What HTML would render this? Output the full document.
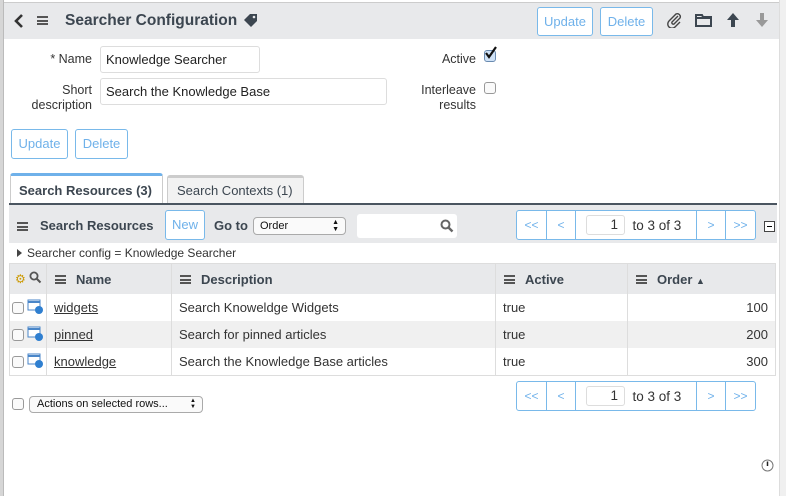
<!DOCTYPE html>
<html><head><meta charset="utf-8"><style>
*{box-sizing:border-box;margin:0;padding:0}
body{width:786px;height:496px;overflow:hidden;background:#fff;font-family:"Liberation Sans",sans-serif;font-size:13px;color:#333;position:relative}
.a{position:absolute}
.btn{position:absolute;border:1px solid #79b9ea;border-radius:3px;background:#fff;color:#6fb1ea;font-size:13px;text-align:center}
.inp{position:absolute;border:1px solid #ddd;border-radius:3px;background:#fff;padding-left:5px;font-size:13px;color:#222}
.lbl{position:absolute;text-align:right;font-size:12.5px;color:#333;line-height:15px}
.ham{position:absolute;width:11px;height:9px;border-top:2px solid #555;border-bottom:2px solid #555}
.ham:after{content:"";position:absolute;left:0;right:0;top:1.5px;border-top:2px solid #555}
.cb{position:absolute;width:12px;height:12px;border:1px solid #999;border-radius:3px;background:#fafafa}
.pager{position:absolute;display:flex;border:1px solid #79b9ea;border-radius:3px;background:#fff;height:30px}
.pager div{border-right:1px solid #79b9ea;color:#6fb1ea;font-size:12px;display:flex;align-items:center;justify-content:center}
.pager div:last-child{border-right:none}
.col{position:absolute;top:0;height:112px;border-left:1px solid #ddd}
.link{color:#333;text-decoration:underline}
</style></head><body>
<div class="a" style="left:0;top:0;width:3px;height:496px;background:#d6d6d6"></div>
<div class="a" style="left:3px;top:0;width:1px;height:496px;background:#bbb"></div>
<div class="a" style="left:779px;top:0;width:7px;height:496px;background:#f0f0f0;border-left:1px solid #ddd"></div>
<div class="a" style="left:4px;top:2px;width:775px;height:37px;background:#e8e9eb;border-top:1px solid #ccc"></div>
<svg class="a" style="left:14px;top:14px" width="10" height="14"><path d="M8 1L2 7l6 6" stroke="#333" stroke-width="2.6" fill="none"/></svg>
<div class="ham" style="left:37px;top:16px"></div>
<div class="a" style="left:65px;top:12px;font-size:15.5px;font-weight:bold;color:#3c4650">Searcher Configuration</div>
<svg class="a" style="left:243px;top:13px" width="16" height="14"><path d="M1 7L7 1h7v7l-6 6z" fill="#3c4650"/><circle cx="11" cy="4" r="1.3" fill="#e8e9eb"/></svg>
<div class="btn" style="left:537px;top:7px;width:56px;height:29px;line-height:27px">Update</div>
<div class="btn" style="left:600px;top:7px;width:53px;height:29px;line-height:27px">Delete</div>
<svg class="a" style="left:666px;top:12px" width="16" height="16"><path d="M12 4L6 10a1.5 1.5 0 0 0 2 2l6-6a3 3 0 0 0-4-4L3 9a4 4 0 0 0 6 6l5-5" stroke="#444" stroke-width="1.4" fill="none"/></svg>
<svg class="a" style="left:695px;top:13px" width="17" height="14"><path d="M1 2h6l1 2h8v9H1z" fill="none" stroke="#3c4650" stroke-width="2"/><path d="M1 5h15" stroke="#3c4650" stroke-width="2"/></svg>
<svg class="a" style="left:726px;top:12px" width="14" height="16"><path d="M7 1l6 7H9v7H5V8H1z" fill="#3c4650"/></svg>
<svg class="a" style="left:755px;top:12px" width="14" height="16"><path d="M7 15l6-7H9V1H5v7H1z" fill="#999"/></svg>
<div class="lbl" style="left:20px;top:52px;width:72px">* Name</div>
<div class="inp" style="left:100px;top:46px;width:160px;height:27px;line-height:25px">Knowledge Searcher</div>
<div class="lbl" style="left:20px;top:83px;width:72px">Short<br>description</div>
<div class="inp" style="left:100px;top:78px;width:287px;height:27px;line-height:25px">Search the Knowledge Base</div>
<div class="lbl" style="left:400px;top:52px;width:76px">Active</div>
<div class="cb" style="left:484px;top:50px;background:#cfe2f7;border-color:#6a8bb0"></div>
<svg class="a" style="left:484px;top:46px" width="14" height="14"><path d="M2 7l3 4 7-10" stroke="#111" stroke-width="2.2" fill="none"/></svg>
<div class="lbl" style="left:400px;top:83px;width:76px">Interleave<br>results</div>
<div class="cb" style="left:484px;top:82px"></div>
<div class="btn" style="left:11px;top:129px;width:57px;height:30px;line-height:28px">Update</div>
<div class="btn" style="left:75px;top:129px;width:53px;height:30px;line-height:28px">Delete</div>
<div class="a" style="left:10px;top:173px;width:153px;height:31px;border:1px solid #ccc;border-top:3px solid #6fb1ea;border-bottom:none;border-radius:3px 3px 0 0;background:#fff;font-weight:bold;color:#3c4650;padding:7px 0 0 8px">Search Resources (3)</div>
<div class="a" style="left:167px;top:175px;width:137px;height:29px;border:1px solid #ccc;border-top:3px solid #ccc;border-bottom:none;border-radius:3px 3px 0 0;background:#f2f2f2;color:#3c4650;padding:5px 0 0 9px">Search Contexts (1)</div>
<div class="a" style="left:9px;top:203px;width:768px;height:2px;background:#4a5560"></div>
<div class="a" style="left:9px;top:205px;width:768px;height:38px;background:#e8e9eb"></div>
<div class="ham" style="left:17px;top:222px"></div>
<div class="a" style="left:40px;top:218px;font-weight:bold;color:#3c4650">Search Resources</div>
<div class="btn" style="left:165px;top:210px;width:40px;height:30px;line-height:27px">New</div>
<div class="a" style="left:214px;top:218px;font-weight:bold;color:#3c4650">Go to</div>
<div class="a" style="left:253px;top:217px;width:93px;height:18px;border:1px solid #aaa;border-radius:4px;background:#fafafa;font-size:11px;padding:2px 0 0 6px;color:#111">Order<span style="position:absolute;right:6px;top:1px;font-size:7px;line-height:7px">&#9650;<br>&#9660;</span></div>
<div class="a" style="left:357px;top:214px;width:100px;height:24px;background:#fff;border-radius:3px"></div>
<svg class="a" style="left:440px;top:219px" width="14" height="14"><circle cx="5.5" cy="5.5" r="4" stroke="#666" stroke-width="2" fill="none"/><path d="M8.5 8.5l4 4" stroke="#666" stroke-width="2.4"/></svg>
<div class="pager" style="left:516px;top:210px;width:240px">
<div style="width:30px">&lt;&lt;</div><div style="width:29px">&lt;</div>
<div style="width:121px;color:#333;font-size:13.5px;justify-content:flex-start;padding-left:10px"><span style="display:inline-block;width:39px;height:20px;border:1px solid #ddd;border-radius:3px;text-align:right;padding-right:6px;line-height:18px">1</span>&nbsp;&nbsp;to 3 of 3</div>
<div style="width:29px">&gt;</div><div style="width:29px">&gt;&gt;</div></div>
<div class="a" style="left:764px;top:221px;width:11px;height:11px;border:1px solid #444;background:#fff"><div style="margin:4px 2px 0;height:1px;background:#000"></div></div>
<svg class="a" style="left:17px;top:248px" width="6" height="10"><path d="M0 1l5 4-5 4z" fill="#444"/></svg>
<div class="a" style="left:27px;top:246px;font-size:12px">Searcher config = Knowledge Searcher</div>
<div class="a" style="left:9px;top:263px;width:767px;height:113px;border:1px solid #ddd">
<div class="a" style="left:0;top:0;width:765px;height:30px;background:#e8e9eb"></div>
<div class="a" style="left:0;top:57px;width:765px;height:27px;background:#f0f0f0"></div>
<div class="col" style="left:36px"></div><div class="col" style="left:161px"></div><div class="col" style="left:485px"></div><div class="col" style="left:617px"></div>
</div>
<div class="a" style="left:15px;top:272px;color:#c90;font-size:12px">&#9881;</div>
<svg class="a" style="left:29px;top:271px" width="13" height="13"><circle cx="5" cy="5" r="3.6" stroke="#555" stroke-width="1.8" fill="none"/><path d="M7.5 7.5l4 4" stroke="#555" stroke-width="2"/></svg>
<div class="ham" style="left:55px;top:275px"></div><div class="a" style="left:76px;top:272px;font-weight:bold;color:#3c4650">Name</div>
<div class="ham" style="left:180px;top:275px"></div><div class="a" style="left:201px;top:272px;font-weight:bold;color:#3c4650">Description</div>
<div class="ham" style="left:504px;top:275px"></div><div class="a" style="left:525px;top:272px;font-weight:bold;color:#3c4650">Active</div>
<div class="ham" style="left:636px;top:275px"></div><div class="a" style="left:657px;top:272px;font-weight:bold;color:#3c4650">Order <span style="font-size:9px">&#9650;</span></div>
<div class="cb" style="left:12px;top:302px"></div><svg class="a" style="left:27px;top:299px" width="17" height="16"><rect x="1" y="1" width="12" height="10" fill="#fff" stroke="#4a86c8"/><path d="M1 3h12" stroke="#4a86c8" stroke-width="2"/><circle cx="12" cy="11" r="4" fill="#2f7fd0"/></svg>
<div class="a link" style="left:54px;top:300px">widgets</div><div class="a" style="left:179px;top:300px">Search Knoweldge Widgets</div><div class="a" style="left:503px;top:300px">true</div><div class="a" style="left:700px;top:300px;width:68px;text-align:right">100</div>
<div class="cb" style="left:12px;top:329px"></div><svg class="a" style="left:27px;top:326px" width="17" height="16"><rect x="1" y="1" width="12" height="10" fill="#fff" stroke="#4a86c8"/><path d="M1 3h12" stroke="#4a86c8" stroke-width="2"/><circle cx="12" cy="11" r="4" fill="#2f7fd0"/></svg>
<div class="a link" style="left:54px;top:327px">pinned</div><div class="a" style="left:179px;top:327px">Search for pinned articles</div><div class="a" style="left:503px;top:327px">true</div><div class="a" style="left:700px;top:327px;width:68px;text-align:right">200</div>
<div class="cb" style="left:12px;top:356px"></div><svg class="a" style="left:27px;top:353px" width="17" height="16"><rect x="1" y="1" width="12" height="10" fill="#fff" stroke="#4a86c8"/><path d="M1 3h12" stroke="#4a86c8" stroke-width="2"/><circle cx="12" cy="11" r="4" fill="#2f7fd0"/></svg>
<div class="a link" style="left:54px;top:354px">knowledge</div><div class="a" style="left:179px;top:354px">Search the Knowledge Base articles</div><div class="a" style="left:503px;top:354px">true</div><div class="a" style="left:700px;top:354px;width:68px;text-align:right">300</div>
<div class="pager" style="left:516px;top:381px;width:240px">
<div style="width:30px">&lt;&lt;</div><div style="width:29px">&lt;</div>
<div style="width:121px;color:#333;font-size:13.5px;justify-content:flex-start;padding-left:10px"><span style="display:inline-block;width:39px;height:20px;border:1px solid #ddd;border-radius:3px;text-align:right;padding-right:6px;line-height:18px">1</span>&nbsp;&nbsp;to 3 of 3</div>
<div style="width:29px">&gt;</div><div style="width:29px">&gt;&gt;</div></div>
<div class="cb" style="left:12px;top:398px"></div>
<div class="a" style="left:29px;top:396px;width:174px;height:17px;border:1px solid #aaa;border-radius:4px;background:#fafafa;font-size:11px;padding:1px 0 0 7px;color:#111">Actions on selected rows...<span style="position:absolute;right:6px;top:1px;font-size:6px;line-height:6px">&#9650;<br>&#9660;</span></div>
<svg class="a" style="left:761px;top:459px" width="13" height="13"><circle cx="6.5" cy="6.5" r="5.5" fill="#fff" stroke="#777"/><path d="M6.5 2.5v4.5" stroke="#222" stroke-width="1.5"/></svg>
</body></html>
